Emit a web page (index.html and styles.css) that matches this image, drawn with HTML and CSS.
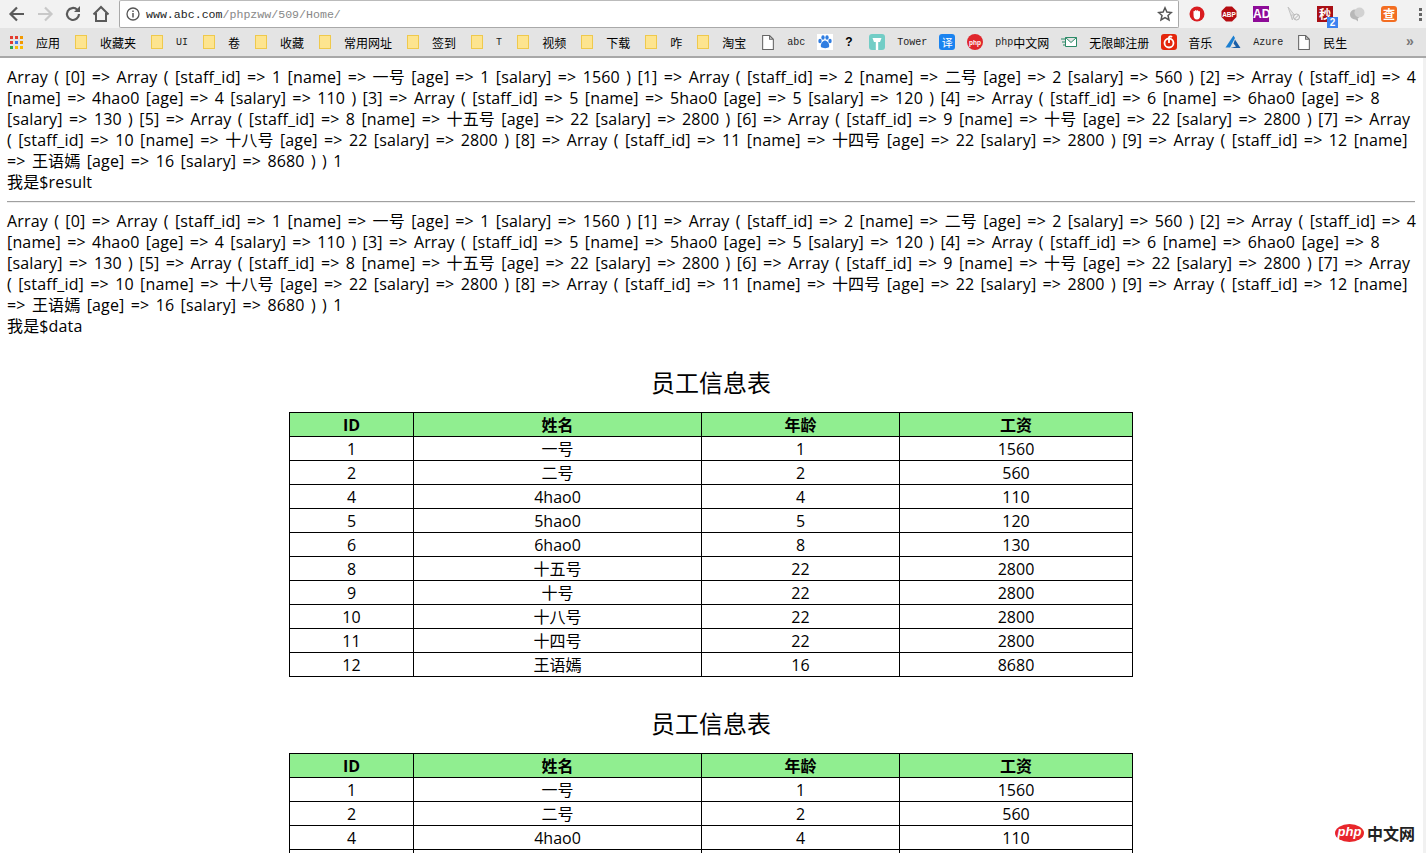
FILE: index.html
```html
<!DOCTYPE html>
<html>
	<head>
		<meta charset="UTF-8">
		<title>员工信息表</title>
		<link rel="stylesheet" href="styles.css">
	</head>
	<body>
		<div class="browser">
			<div class="toolbar">
				<svg class="nav-icon" viewBox="0 0 20 20"><path d="M17 10H4M10 3.500L3.500 10l6.500 6.500" fill="none" stroke="#5a5a5a" stroke-width="2.200"/></svg>
				<svg class="nav-icon" viewBox="0 0 20 20"><path d="M3 10h13M10 3.500l6.500 6.500-6.500 6.500" fill="none" stroke="#c8c8c8" stroke-width="2.200"/></svg>
				<svg class="nav-icon" viewBox="0 0 20 20"><path d="M16 10a6 6 0 1 1-1.800-4.300" fill="none" stroke="#5a5a5a" stroke-width="2.200"/><path d="M17 2v6h-6z" fill="#5a5a5a"/></svg>
				<svg class="nav-icon" viewBox="0 0 20 20"><path d="M2.500 10.500L10 3l7.500 7.500M5 9v8h10V9" fill="none" stroke="#5a5a5a" stroke-width="2"/></svg>
				<div class="omnibox">
					<svg class="info-icon" viewBox="0 0 14 14"><circle cx="7" cy="7" r="6" fill="none" stroke="#555" stroke-width="1.300"/><path d="M7 6v4.500M7 3.500v1.500" stroke="#555" stroke-width="1.500"/></svg>
					<span class="url">www.abc.com<span class="url-path">/phpzww/509/Home/</span></span>
					<svg class="star" viewBox="0 0 16 16"><path d="M8 1.800l1.900 4.200 4.500.5-3.400 3 1 4.500L8 11.700 4 14l1-4.500-3.400-3 4.500-.5z" fill="none" stroke="#555" stroke-width="1.500"/></svg>
				</div>
				<div class="extensions">
					<svg class="ext" viewBox="0 0 16 16"><circle cx="8" cy="8" r="7.500" fill="#d91c20"/><path d="M4.500 8.500V5.500c0-1 1.300-1 1.500 0 0-1.800 1.500-1.800 1.700-.3.200-1.300 1.700-1.200 1.700.3.300-.8 1.600-.6 1.600.4v4.100c0 2-1 3.500-3 3.500-2.500 0-3.500-1.500-3.500-5z" fill="#fff"/></svg>
					<svg class="ext" viewBox="0 0 16 16"><path d="M5 .500h6L15.500 5v6L11 15.500H5L.500 11V5z" fill="#b50d12"/><text x="8" y="10.500" class="ext-text">ABP</text></svg>
					<span class="ext-box ext-ad">AD</span>
					<svg class="ext" viewBox="0 0 16 16"><path d="M3 1l6.500 8H6.500l1 5z" fill="#e4e4e4" stroke="#c4c4c4"/><circle cx="11.500" cy="11" r="3" fill="none" stroke="#b4b4b4"/><path d="M9.500 13l4-4" stroke="#b4b4b4"/></svg>
					<span class="ext-box ext-sec">秒<span class="ext-badge">2</span></span>
					<svg class="ext" viewBox="0 0 16 16"><circle cx="6" cy="8.500" r="5" fill="#b8b8b8"/><circle cx="10.500" cy="6.500" r="5" fill="#d2d2d2"/><path d="M6 13l3 2.500v-3z" fill="#b8b8b8"/></svg>
					<span class="ext-box ext-cha">查</span>
				</div>
				<div class="menu-dots"><i></i><i></i><i></i></div>
			</div>
			<div class="bookmarks">
				<span class="mark"><span class="apps"><i class="r"></i><i class="r"></i><i class="o"></i><i class="r"></i><i class="b"></i><i class="o"></i><i class="g"></i><i class="y"></i><i class="y"></i></span><span class="cjk">应用</span></span>
				<span class="mark"><i class="folder"></i><span class="cjk">收藏夹</span></span>
				<span class="mark"><i class="folder"></i><span class="latin">UI</span></span>
				<span class="mark"><i class="folder"></i><span class="cjk">卷</span></span>
				<span class="mark"><i class="folder"></i><span class="cjk">收藏</span></span>
				<span class="mark"><i class="folder"></i><span class="cjk">常用网址</span></span>
				<span class="mark"><i class="folder"></i><span class="cjk">签到</span></span>
				<span class="mark"><i class="folder"></i><span class="latin">T</span></span>
				<span class="mark"><i class="folder"></i><span class="cjk">视频</span></span>
				<span class="mark"><i class="folder"></i><span class="cjk">下载</span></span>
				<span class="mark"><i class="folder"></i><span class="cjk">咋</span></span>
				<span class="mark"><i class="folder"></i><span class="cjk">淘宝</span></span>
				<span class="mark mark-tight"><svg class="page-icon page-icon-wide" viewBox="0 0 11 14"><path d="M.500.500h6.500l3.500 3.500v9.500H.500zM7 .500V4h3.500" fill="#fff" stroke="#666"/></svg><span class="latin">abc</span></span>
				<span class="mark mark-icon"><svg class="fav" viewBox="0 0 16 16"><rect width="16" height="16" fill="#fff"/><g fill="#2f7de1"><ellipse cx="3" cy="7" rx="1.700" ry="2.200"/><ellipse cx="6" cy="3.500" rx="1.700" ry="2.200"/><ellipse cx="10" cy="3.500" rx="1.700" ry="2.200"/><ellipse cx="13" cy="7" rx="1.700" ry="2.200"/><path d="M8 6.500c2.500 0 5 4 4 6.500-1 1.500-6.500 1.500-8 0-1-2.500 1.500-6.500 4-6.500z"/></g></svg></span>
				<span class="mark mark-icon"><span class="quest">?</span></span>
				<span class="mark mark-tight"><svg class="fav" viewBox="0 0 16 16"><rect width="16" height="16" rx="3" fill="#72cdc6"/><path d="M3.500 4h9l-1.500 4H5z" fill="#fff"/><path d="M6.800 8h2.400v8H6.800z" fill="#fff"/></svg><span class="latin">Tower</span></span>
				<span class="mark mark-icon"><span class="tile tile-yi">译</span></span>
				<span class="mark mark-tight"><svg class="fav" viewBox="0 0 16 16"><circle cx="8" cy="8" r="8" fill="#e0262c"/><text x="8" y="10.500" class="ext-text">php</text></svg><span class="latin">php</span><span class="cjk">中文网</span></span>
				<span class="mark mark-tight"><svg class="fav" viewBox="0 0 16 12"><path d="M4.500 1.500h11v9h-11zM4.500 1.500l5.500 5 5.500-5" fill="#fff" stroke="#2b8a67"/><path d="M0 3h4M1 6h3M2 9h2" stroke="#2b8a67"/></svg><span class="cjk">无限邮注册</span></span>
				<span class="mark"><span class="tile tile-music"><svg viewBox="0 0 16 16"><circle cx="8" cy="9" r="4.500" fill="none" stroke="#fff" stroke-width="1.800"/><path d="M8 9V3.500c0-1 2-1.500 3-.500" fill="none" stroke="#fff" stroke-width="1.800"/></svg></span><span class="cjk">音乐</span></span>
				<span class="mark"><svg class="fav" viewBox="0 0 16 14"><path d="M8.500 .500L.500 12.500h4.500L10 3z" fill="#1b7fd1"/><path d="M10 4.500l5.500 8.500H5.500l5.500-1.500-2.500-3z" fill="#1b5fa8"/></svg><span class="latin">Azure</span></span>
				<span class="mark"><svg class="page-icon" viewBox="0 0 11 14"><path d="M.500.500h6.500l3.500 3.500v9.500H.500zM7 .500V4h3.500" fill="#fff" stroke="#666"/></svg><span class="cjk">民生</span></span>
				<span class="more">»</span>
			</div>
		</div>
		<div class="viewport">
			<main class="page">
				<p class="dump">Array ( [0] =&gt; Array ( [staff_id] =&gt; 1 [name] =&gt; 一号 [age] =&gt; 1 [salary] =&gt; 1560 ) [1] =&gt; Array ( [staff_id] =&gt; 2 [name] =&gt; 二号 [age] =&gt; 2 [salary] =&gt; 560 ) [2] =&gt; Array ( [staff_id] =&gt; 4<br>[name] =&gt; 4hao0 [age] =&gt; 4 [salary] =&gt; 110 ) [3] =&gt; Array ( [staff_id] =&gt; 5 [name] =&gt; 5hao0 [age] =&gt; 5 [salary] =&gt; 120 ) [4] =&gt; Array ( [staff_id] =&gt; 6 [name] =&gt; 6hao0 [age] =&gt; 8<br>[salary] =&gt; 130 ) [5] =&gt; Array ( [staff_id] =&gt; 8 [name] =&gt; 十五号 [age] =&gt; 22 [salary] =&gt; 2800 ) [6] =&gt; Array ( [staff_id] =&gt; 9 [name] =&gt; 十号 [age] =&gt; 22 [salary] =&gt; 2800 ) [7] =&gt; Array<br>( [staff_id] =&gt; 10 [name] =&gt; 十八号 [age] =&gt; 22 [salary] =&gt; 2800 ) [8] =&gt; Array ( [staff_id] =&gt; 11 [name] =&gt; 十四号 [age] =&gt; 22 [salary] =&gt; 2800 ) [9] =&gt; Array ( [staff_id] =&gt; 12 [name]<br>=&gt; 王语嫣 [age] =&gt; 16 [salary] =&gt; 8680 ) ) 1<br>我是$result</p>
				<hr class="rule">
				<p class="dump">Array ( [0] =&gt; Array ( [staff_id] =&gt; 1 [name] =&gt; 一号 [age] =&gt; 1 [salary] =&gt; 1560 ) [1] =&gt; Array ( [staff_id] =&gt; 2 [name] =&gt; 二号 [age] =&gt; 2 [salary] =&gt; 560 ) [2] =&gt; Array ( [staff_id] =&gt; 4<br>[name] =&gt; 4hao0 [age] =&gt; 4 [salary] =&gt; 110 ) [3] =&gt; Array ( [staff_id] =&gt; 5 [name] =&gt; 5hao0 [age] =&gt; 5 [salary] =&gt; 120 ) [4] =&gt; Array ( [staff_id] =&gt; 6 [name] =&gt; 6hao0 [age] =&gt; 8<br>[salary] =&gt; 130 ) [5] =&gt; Array ( [staff_id] =&gt; 8 [name] =&gt; 十五号 [age] =&gt; 22 [salary] =&gt; 2800 ) [6] =&gt; Array ( [staff_id] =&gt; 9 [name] =&gt; 十号 [age] =&gt; 22 [salary] =&gt; 2800 ) [7] =&gt; Array<br>( [staff_id] =&gt; 10 [name] =&gt; 十八号 [age] =&gt; 22 [salary] =&gt; 2800 ) [8] =&gt; Array ( [staff_id] =&gt; 11 [name] =&gt; 十四号 [age] =&gt; 22 [salary] =&gt; 2800 ) [9] =&gt; Array ( [staff_id] =&gt; 12 [name]<br>=&gt; 王语嫣 [age] =&gt; 16 [salary] =&gt; 8680 ) ) 1<br>我是$data</p>
				<h2 class="title title-first">员工信息表</h2>
				<table class="staff">
					<tr><th>ID</th><th>姓名</th><th>年龄</th><th>工资</th></tr>
					<tr><td>1</td><td>一号</td><td>1</td><td>1560</td></tr>
					<tr><td>2</td><td>二号</td><td>2</td><td>560</td></tr>
					<tr><td>4</td><td>4hao0</td><td>4</td><td>110</td></tr>
					<tr><td>5</td><td>5hao0</td><td>5</td><td>120</td></tr>
					<tr><td>6</td><td>6hao0</td><td>8</td><td>130</td></tr>
					<tr><td>8</td><td>十五号</td><td>22</td><td>2800</td></tr>
					<tr><td>9</td><td>十号</td><td>22</td><td>2800</td></tr>
					<tr><td>10</td><td>十八号</td><td>22</td><td>2800</td></tr>
					<tr><td>11</td><td>十四号</td><td>22</td><td>2800</td></tr>
					<tr><td>12</td><td>王语嫣</td><td>16</td><td>8680</td></tr>
				</table>
				<h2 class="title">员工信息表</h2>
				<table class="staff">
					<tr><th>ID</th><th>姓名</th><th>年龄</th><th>工资</th></tr>
					<tr><td>1</td><td>一号</td><td>1</td><td>1560</td></tr>
					<tr><td>2</td><td>二号</td><td>2</td><td>560</td></tr>
					<tr><td>4</td><td>4hao0</td><td>4</td><td>110</td></tr>
					<tr><td></td><td></td><td></td><td></td></tr>
				</table>
			</main>
			<div class="watermark"><span class="wm-php">php</span><span class="wm-cn">中文网</span></div>
		</div>
	</body>
</html>
```
FILE: styles.css
```css
* {
	box-sizing: border-box;
}
html, body {
	margin: 0;
	height: 100%;
	overflow: hidden;
}
body {
	display: flex;
	flex-direction: column;
	background: #fff;
	color: #000;
	font-family: "Open Sans", "Noto Sans CJK SC", sans-serif;
}
.browser {
	flex: none;
	height: 58px;
	background: #e4e4e4;
	border-bottom: 2px solid #a8a8a8;
}
.toolbar {
	display: flex;
	align-items: center;
	height: 28px;
	background: #f2f2f2;
	padding-left: 7px;
}
.nav-icon {
	width: 20px;
	height: 20px;
	margin-right: 8px;
	flex: none;
}
.omnibox {
	display: flex;
	align-items: center;
	width: 1060px;
	height: 28px;
	padding: 0 5px 0 6px;
	background: #fff;
	border: 1px solid #a9a9a9;
	border-top-color: #bbb;
	border-radius: 2px;
}
.info-icon {
	width: 14px;
	height: 14px;
}
.url {
	flex: 1;
	margin-left: 6px;
	font: 11.600px "Liberation Mono", monospace;
	color: #222;
}
.url-path {
	color: #888;
}
.star {
	width: 16px;
	height: 16px;
}
.extensions {
	display: flex;
	align-items: center;
	gap: 16px;
	margin-left: 10px;
}
.ext {
	width: 16px;
	height: 16px;
	display: block;
}
.ext-text {
	font: bold 6.500px "Liberation Sans", sans-serif;
	fill: #fff;
	text-anchor: middle;
}
.ext-box {
	position: relative;
	display: block;
	width: 16px;
	height: 16px;
	font: bold 12px/16px "Noto Sans CJK SC", sans-serif;
	color: #fff;
	text-align: center;
}
.ext-ad {
	background: #8e0b98;
	font-family: "Liberation Sans", sans-serif;
}
.ext-sec {
	background: #a90f15;
}
.ext-cha {
	background: #f36d21;
	border-radius: 3px;
}
.ext-badge {
	position: absolute;
	right: -5px;
	bottom: -6px;
	width: 11px;
	height: 11px;
	background: #3b82f0;
	font: bold 10px/11px "Liberation Sans", sans-serif;
}
.menu-dots {
	display: flex;
	flex-direction: column;
	gap: 2px;
	margin-left: 22px;
}
.menu-dots i {
	width: 3px;
	height: 3px;
	background: #666;
}
.bookmarks {
	display: flex;
	align-items: center;
	height: 28px;
	padding-left: 10px;
	font-size: 12px;
	white-space: nowrap;
	overflow: hidden;
}
.mark {
	display: flex;
	align-items: center;
	margin-right: 13px;
}
.mark-tight {
	margin-right: 12px;
}
.mark-icon {
	margin-right: 0;
}
.apps {
	display: grid;
	grid-template-columns: repeat(3, 3px);
	gap: 2px;
	margin-right: 13px;
}
.apps i {
	width: 3px;
	height: 3px;
}
.apps .r {
	background: #e33b2e;
}
.apps .o {
	background: #f29900;
}
.apps .b {
	background: #3b78e7;
}
.apps .g {
	background: #2da44e;
}
.apps .y {
	background: #fbbc05;
}
.folder {
	width: 12px;
	height: 14px;
	margin: 0 13px 0 2px;
	background: #fde48f;
	border: 1px solid #efc94c;
}
.page-icon {
	width: 12px;
	height: 15px;
	margin: 0 13px 0 2px;
}
.page-icon-wide {
	margin-left: 3px;
}
.fav {
	width: 16px;
	height: 16px;
	margin-right: 12px;
}
.tile {
	display: block;
	width: 16px;
	height: 16px;
	margin-right: 12px;
	border-radius: 3px;
	color: #fff;
	text-align: center;
	font: 11px/16px "Noto Sans CJK SC", sans-serif;
}
.tile-yi {
	background: #1a83f0;
}
.tile-music {
	background: #e4260c;
	margin-right: 11px;
}
.latin {
	font: 10px "Liberation Mono", monospace;
	color: #222;
}
.quest {
	width: 24px;
	font: bold 12px "Liberation Sans", sans-serif;
}
.cjk {
	font: 12px "Noto Sans CJK SC", sans-serif;
}
.more {
	position: absolute;
	left: 1406px;
	top: 33px;
	color: #777;
	font: bold 14px "Liberation Sans", sans-serif;
}
.viewport {
	position: relative;
	flex: 1;
	min-height: 0;
	overflow: hidden;
	border-right: 3px solid #f1f1f1;
}
.page {
	padding: 9px 8px 0 7px;
	font-size: 16px;
	line-height: 21px;
}
.dump {
	margin: 0;
	white-space: nowrap;
	letter-spacing: 0.15px;
	word-spacing: 2px;
}
.rule {
	margin: 8px 0;
	border: 0;
	border-top: 1px solid #a0a0a0;
	border-bottom: 1px solid #eee;
}
.title {
	margin: 30px 0 14px;
	font: 24px/32px "Noto Sans CJK SC", sans-serif;
	text-align: center;
}
.title-first {
	margin-top: 29px;
}
.staff {
	width: 844px;
	margin: 0 auto;
	border-collapse: collapse;
	table-layout: fixed;
}
.staff th, .staff td {
	height: 24px;
	padding: 0;
	border: 1px solid #000;
	text-align: center;
	font-size: 16px;
	line-height: 22px;
}
.staff th {
	background: #90ee90;
	font-weight: bold;
}
.staff th:nth-child(1) {
	width: 124px;
}
.staff th:nth-child(2) {
	width: 288px;
}
.staff th:nth-child(3) {
	width: 198px;
}
.watermark {
	position: absolute;
	right: 8px;
	bottom: 11px;
	display: flex;
	align-items: center;
	gap: 3px;
}
.wm-php {
	width: 29px;
	height: 18px;
	border-radius: 50%;
	background: #e8262a;
	color: #fff;
	text-align: center;
	font: italic bold 13px/16px "Liberation Sans", sans-serif;
}
.wm-cn {
	font: bold 16px/18px "Noto Sans CJK SC", sans-serif;
	color: #222;
}
```
